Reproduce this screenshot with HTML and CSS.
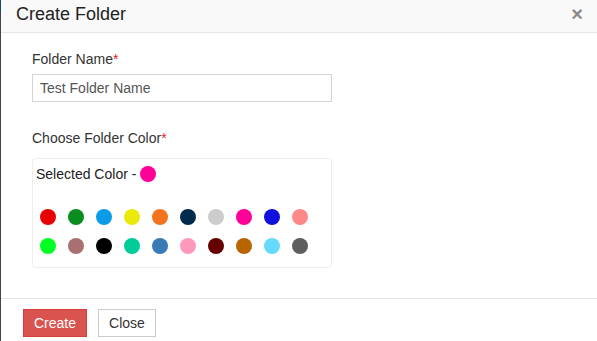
FILE: index.html
```html
<!DOCTYPE html>
<html lang="en">
<head>
    <meta charset="UTF-8" />
    <meta name="viewport" content="width=device-width, initial-scale=1.0" />
    <title>Create Folder</title>
    <link rel="stylesheet" href="styles.css">
</head>
<body>
    <div class="modal">
        <div class="modal-header">
            <h4 class="modal-title">Create Folder</h4>
            <span class="close">&times;</span>
        </div>

        <div class="modal-body">
            <div class="form-group">
                <label for="folderName">Folder Name<span class="req">*</span></label>
                <input type="text" id="folderName" value="Test Folder Name" />
            </div>

            <div class="form-group">
                <label>Choose Folder Color<span class="req">*</span></label>
                <div class="color-box">
                    <div class="selected">Selected Color -&nbsp;<span class="dot" style="background:#ff0099"></span></div>
                    <div class="palette">
                        <span class="dot" style="background:#e60000"></span>
                        <span class="dot" style="background:#0a8c1e"></span>
                        <span class="dot" style="background:#0b9ce8"></span>
                        <span class="dot" style="background:#ebe80c"></span>
                        <span class="dot" style="background:#f47321"></span>
                        <span class="dot" style="background:#002b4c"></span>
                        <span class="dot" style="background:#cccccc"></span>
                        <span class="dot" style="background:#ff0099"></span>
                        <span class="dot" style="background:#1010dd"></span>
                        <span class="dot" style="background:#ff8888"></span>
                        <span class="dot" style="background:#00ff22"></span>
                        <span class="dot" style="background:#a87070"></span>
                        <span class="dot" style="background:#000000"></span>
                        <span class="dot" style="background:#00cc99"></span>
                        <span class="dot" style="background:#3b7ab8"></span>
                        <span class="dot" style="background:#ff99bb"></span>
                        <span class="dot" style="background:#660000"></span>
                        <span class="dot" style="background:#b86500"></span>
                        <span class="dot" style="background:#66d9ff"></span>
                        <span class="dot" style="background:#5e5e5e"></span>
                    </div>
                </div>
            </div>
        </div>

        <div class="modal-footer">
            <button class="btn btn-danger">Create</button>
            <button class="btn btn-default">Close</button>
        </div>
    </div>
</body>
</html>
```

FILE: styles.css
```css
html, body {
    height: 100%;
}

body {
    margin: 0;
    font-family: "Liberation Sans", Arial, sans-serif;
    font-size: 14px;
    line-height: 20px;
    color: #333;
    /* dunkler Rand links vom Overlay */
    background: linear-gradient(#1b4a5c 0, #1b4a5c 12px, #444 12px);
}

.modal {
    margin-left: 1px;
    min-height: 100%;
    background: #fff;
    display: flex;
    flex-direction: column;
}

/* Kopfzeile */
.modal-header {
    display: flex;
    justify-content: space-between;
    align-items: flex-start;
    padding: 4px 14px 8px 15px;
    background: #f9f9f9;
    border-bottom: 1px solid #e5e5e5;
}

.modal-title {
    margin: 0;
    font-size: 18px;
    font-weight: normal;
    line-height: 20px;
    color: #222;
}

.close {
    font-size: 20px;
    font-weight: bold;
    line-height: 20px;
    color: #8a8a8a;
    cursor: pointer;
}

/* Inhalt */
.modal-body {
    padding: 16px 31px 30px 31px;
}

.form-group {
    margin-bottom: 26px;
}

.form-group:last-child {
    margin-bottom: 0;
}

label {
    display: block;
    margin-bottom: 5px;
    color: #333;
}

.req {
    color: #e02424;
}

input[type="text"] {
    display: block;
    box-sizing: border-box;
    width: 300px;
    height: 28px;
    padding: 0 7px;
    font-family: inherit;
    font-size: 14px;
    color: #555;
    border: 1px solid #d4d4d4;
    border-radius: 0;
    outline: none;
}

.form-group label + .color-box {
    margin-top: 10px;
}

.color-box {
    box-sizing: border-box;
    width: 300px;
    padding: 5px 0 13px 0;
    border: 1px solid #eeeeee;
    border-radius: 4px;
}

.selected {
    display: flex;
    align-items: center;
    padding-left: 3px;
    margin-bottom: 25px;
    color: #222;
}

.dot {
    display: inline-block;
    width: 16px;
    height: 16px;
    border-radius: 50%;
}

.palette {
    display: grid;
    grid-template-columns: repeat(10, 16px);
    column-gap: 12px;
    row-gap: 13px;
    padding-left: 7px;
}

.palette .dot {
    cursor: pointer;
}

/* Fusszeile */
.modal-footer {
    display: flex;
    gap: 11px;
    padding: 10px 22px;
    border-top: 1px solid #e5e5e5;
}

.btn {
    height: 28px;
    padding: 0 10px;
    font-family: inherit;
    font-size: 14px;
    border: 1px solid #ccc;
    border-radius: 0;
    cursor: pointer;
}

.btn-danger {
    background: #d9534f;
    border-color: #d43f3a;
    color: #fff;
}

.btn-default {
    background: #fff;
    color: #333;
}
```
